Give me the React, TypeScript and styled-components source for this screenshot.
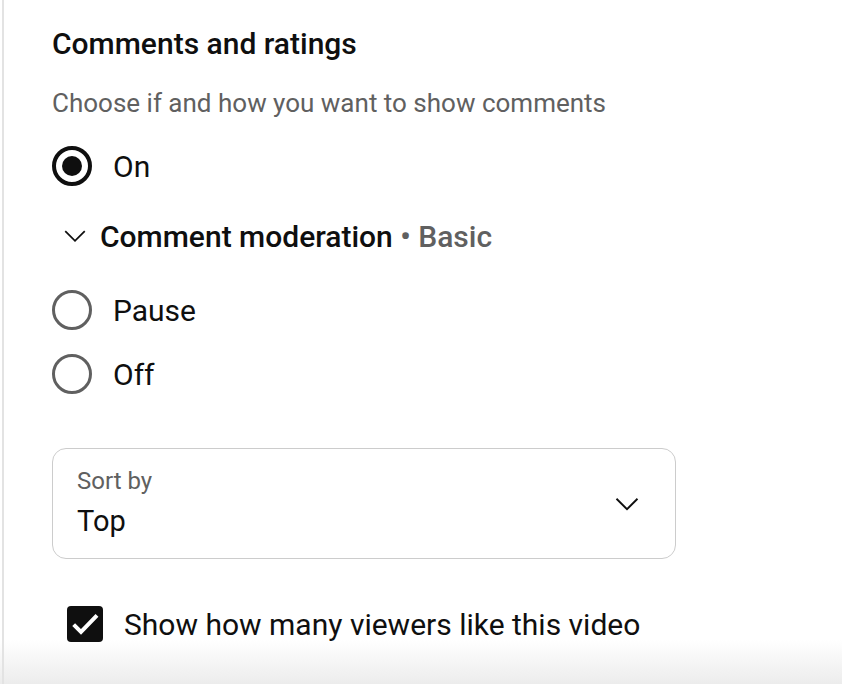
import React, { useState } from "react";
import styled, { createGlobalStyle } from "styled-components";

const GlobalStyle = createGlobalStyle`
    html, body {
        margin: 0;
        padding: 0;
        background: #ffffff;
    }
    body {
        font-family: Roboto, "Noto Sans", Arial, sans-serif;
        color: #0f0f0f;
    }
`;

const Page = styled.div`
    width: 842px;
    height: 684px;
    overflow: hidden;
    display: flex;
    background: linear-gradient(to bottom, #ffffff 0, #ffffff 640px, #ececec 684px);
`;

const Rail = styled.div`
    width: 2px;
    margin-left: 2px;
    background: #e3e3e3;
    flex-shrink: 0;
`;

const Panel = styled.section`
    flex: 1;
    padding: 26px 0 0 48px;
    display: flex;
    flex-direction: column;
`;

const Title = styled.h2`
    margin: 0;
    font-size: 30px;
    font-weight: 500;
    line-height: 36px;
    color: #0f0f0f;
`;

const Subtitle = styled.p`
    margin: 24px 0 0;
    font-size: 26px;
    line-height: 34px;
    color: #606060;
`;

const OptionRow = styled.label<{ $top: number }>`
    display: flex;
    align-items: center;
    gap: 21px;
    margin-top: ${p => p.$top}px;
    height: 40px;
    cursor: pointer;
`;

const RadioCircle = styled.span<{ $checked: boolean }>`
    width: 40px;
    height: 40px;
    box-sizing: border-box;
    border-radius: 50%;
    border: ${p => (p.$checked ? "4px solid #0f0f0f" : "3.5px solid #606060")};
    display: flex;
    align-items: center;
    justify-content: center;
    flex-shrink: 0;

    &::after {
        content: "";
        width: 20px;
        height: 20px;
        border-radius: 50%;
        background: #0f0f0f;
        display: ${p => (p.$checked ? "block" : "none")};
    }
`;

const OptionText = styled.span`
    font-size: 30px;
    color: #0f0f0f;
`;

const Moderation = styled.div`
    display: flex;
    align-items: center;
    margin: 30px 0 0 10px;
    height: 40px;
    gap: 12px;
`;

const ModerationText = styled.span`
    font-size: 30px;
    font-weight: 500;
    color: #0f0f0f;
`;

const Muted = styled.span`
    color: #606060;
`;

const SelectBox = styled.div`
    margin-top: 54px;
    width: 624px;
    height: 111px;
    box-sizing: border-box;
    border: 1.5px solid #cccccc;
    border-radius: 14px;
    display: flex;
    align-items: center;
    justify-content: space-between;
    padding: 0 34px 0 24px;
`;

const SelectLabels = styled.div`
    display: flex;
    flex-direction: column;
    gap: 5px;
`;

const SelectCaption = styled.span`
    font-size: 24px;
    line-height: 30px;
    color: #606060;
`;

const SelectValue = styled.span`
    font-size: 29px;
    line-height: 40px;
    color: #0f0f0f;
`;

const CheckRow = styled.label`
    display: flex;
    align-items: center;
    gap: 21px;
    margin: 47px 0 0 15px;
    height: 36px;
`;

const CheckBox = styled.span`
    width: 36px;
    height: 36px;
    border-radius: 4px;
    background: #0f0f0f;
    display: flex;
    align-items: center;
    justify-content: center;
    flex-shrink: 0;
`;

const Chevron: React.FC<{ size: number }> = ({ size }) => (
    <svg width={size} height={size} viewBox="0 0 24 24" fill="none" stroke="#0f0f0f" strokeWidth="1.6">
        <path d="M3 7.5l9 9 9-9" />
    </svg>
);

const Radio: React.FC<{ label: string; checked: boolean; top: number; onPick: () => void }> = ({ label, checked, top, onPick }) => (
    <OptionRow $top={top} onClick={onPick}>
        <RadioCircle $checked={checked} />
        <OptionText>{label}</OptionText>
    </OptionRow>
);

export default function App() {
    const [mode, setMode] = useState("on");

    return <>
        <GlobalStyle />
        <Page>
            <Rail />
            <Panel>
                <Title>Comments and ratings</Title>
                <Subtitle>Choose if and how you want to show comments</Subtitle>
                <Radio label="On" checked={mode === "on"} top={26} onPick={() => setMode("on")} />
                <Moderation>
                    <Chevron size={26} />
                    <ModerationText>Comment moderation <Muted>• Basic</Muted></ModerationText>
                </Moderation>
                <Radio label="Pause" checked={mode === "pause"} top={34} onPick={() => setMode("pause")} />
                <Radio label="Off" checked={mode === "off"} top={24} onPick={() => setMode("off")} />
                <SelectBox>
                    <SelectLabels>
                        <SelectCaption>Sort by</SelectCaption>
                        <SelectValue>Top</SelectValue>
                    </SelectLabels>
                    <Chevron size={28} />
                </SelectBox>
                <CheckRow>
                    <CheckBox>
                        <svg width="32" height="32" viewBox="0 0 24 24" fill="none" stroke="#ffffff" strokeWidth="3" strokeLinejoin="miter">
                            <path d="M3.5 12.5l5.5 5.5L21 5.5" />
                        </svg>
                    </CheckBox>
                    <OptionText>Show how many viewers like this video</OptionText>
                </CheckRow>
            </Panel>
        </Page>
    </>;
}
